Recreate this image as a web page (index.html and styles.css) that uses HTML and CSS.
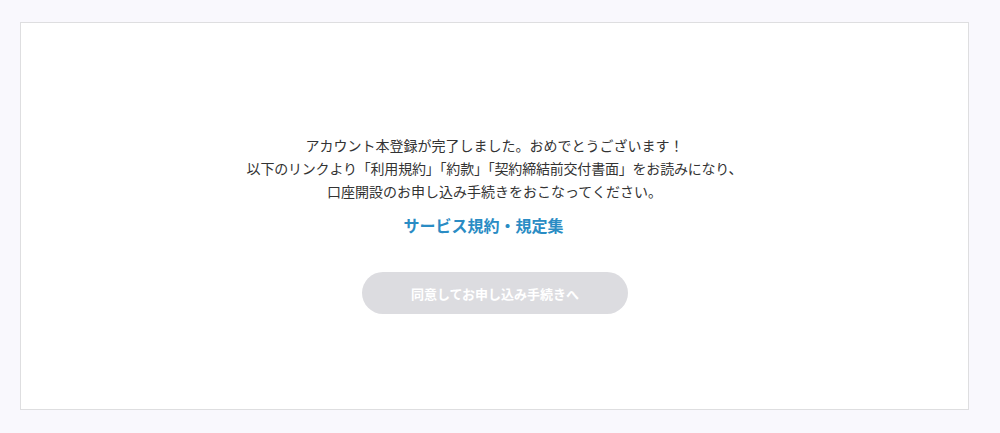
FILE: index.html
```html
<!DOCTYPE html>
<html lang="ja">
<head>
<meta charset="utf-8">
<title>本登録完了</title>
<link rel="stylesheet" href="styles.css">
</head>
<body>
<main class="card">
  <div class="message">
    <p>アカウント本登録が完了しました。おめでとうございます！</p>
    <p class="tight">以下のリンクより「利用規約」「約款」「契約締結前交付書面」をお読みになり、</p>
    <p>口座開設のお申し込み手続きをおこなってください。</p>
  </div>
  <a class="terms-link" href="#">サービス規約・規定集</a>
  <button class="agree-btn" type="button" disabled>同意してお申し込み手続きへ</button>
</main>
</body>
</html>
```
FILE: styles.css
```css
html, body {
  margin: 0;
  padding: 0;
}
body {
  background: #f9f8fd;
  padding: 22px 31px 0 20px;
  font-family: "Noto Sans CJK JP", "Noto Sans", sans-serif;
  color: #333;
}
.card {
  box-sizing: border-box;
  height: 388px;
  background: #fff;
  border: 1px solid #dedee0;
  display: flex;
  flex-direction: column;
  align-items: center;
  padding-top: 111px;
}
.message {
  text-align: center;
  font-size: 14px;
  line-height: 23px;
}
.message p {
  margin: 0;
}
.message .tight {
  letter-spacing: -0.2px;
}
.terms-link {
  margin-top: 10px;
  padding-right: 22px;
  font-size: 16px;
  line-height: 24px;
  font-weight: 700;
  color: #2a8cc4;
  text-decoration: none;
}
.agree-btn {
  margin-top: 35px;
  width: 266px;
  height: 42px;
  border: none;
  border-radius: 21px;
  background: #dcdce0;
  color: #fff;
  font-family: "Noto Sans CJK JP", "Noto Sans", sans-serif;
  font-size: 13px;
  font-weight: 700;
  padding: 0 0 0 1px;
}
```
